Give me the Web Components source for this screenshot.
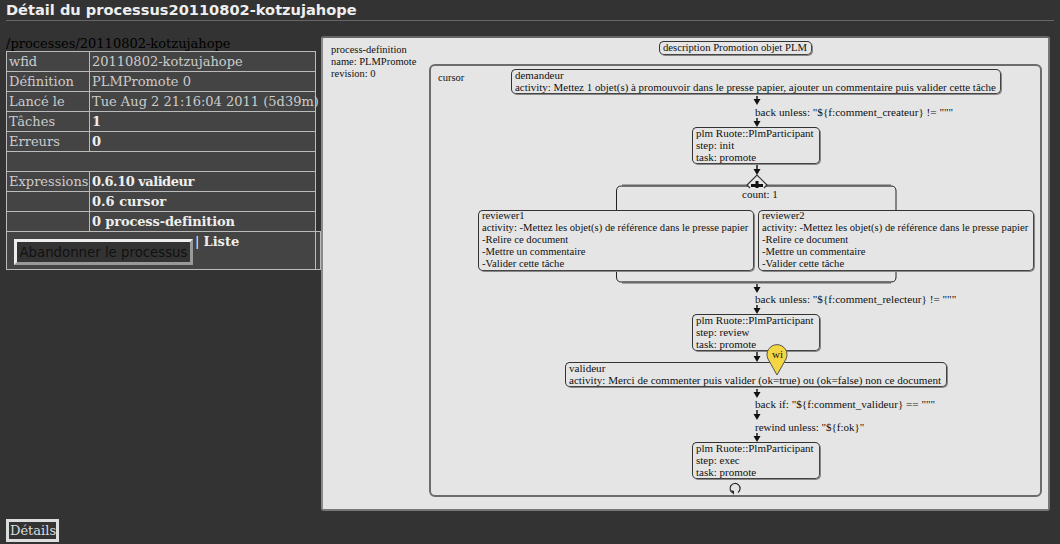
<!DOCTYPE html>
<html lang="fr"><head><meta charset="utf-8"><title>Détail</title>
<style>
html,body{margin:0;padding:0;background:#333;height:544px;overflow:hidden}
body{display:flex;flex-direction:column}
</style></head><body>
<x-title>Détail du processus20110802-kotzujahope</x-title>
<x-main>
  <x-process slot="left"></x-process>
  <x-diagram slot="right"></x-diagram>
</x-main>
<x-foot>Détails</x-foot>
<script>
function def(name, css, html){
  customElements.define(name, class extends HTMLElement{
    connectedCallback(){
      if(this.shadowRoot) return;
      const s=this.attachShadow({mode:'open'});
      s.innerHTML='<style>'+css+'</style>'+(typeof html==='function'?html(this):html);
    }
  });
}
def('x-title',`:host{display:block;margin:0 6px;height:21px;box-sizing:border-box;border-bottom:1px solid #666;font:bold 14.6px/19px "DejaVu Sans",sans-serif;color:#eee}`,'<slot></slot>');
def('x-main',`:host{display:flex;height:490px;box-sizing:border-box;padding:15px 0 0 6px}
 .l{width:315px;flex:none}.r{flex:none}`,'<div class="l"><slot name="left"></slot></div><div class="r"><slot name="right"></slot></div>');
def('x-foot',`:host{display:block;margin:8px 0 0 6px;width:53px;box-sizing:border-box;height:23px;border:3px solid #ddd;padding:0 1px;font:13px/17px "DejaVu Serif",serif;color:#ddd;white-space:nowrap}`,'<slot></slot>');
def('x-button',`:host{display:inline-block}
 button{display:block;box-sizing:border-box;width:179px;height:26px;margin:0;padding:0;background:#333;color:#111;border:3px solid;border-color:#eee #999 #999 #eee;font:13.3px "DejaVu Sans",sans-serif}`,'<button><slot></slot></button>');
def('x-process',`:host{display:block;font:13px/15px "DejaVu Serif",serif;color:#ccc}
 .cap{color:#000;height:15px;white-space:nowrap}
 table{border-collapse:collapse;table-layout:fixed;width:314px}
 td{border:1px solid #bbb;background:#444;padding:0 2px;height:19px;box-sizing:border-box;white-space:nowrap;vertical-align:middle}
 b{color:#eee}
 .last td{height:38px;vertical-align:top}
 .tools{display:flex;align-items:flex-start;padding:7px 0 0 7px}
 .tools span{margin:-5px 0 0 2px;color:#eee}
 tr{height:20px}`,
 `<div class="cap">/processes/20110802-kotzujahope</div>
 <table><colgroup><col style="width:83px"><col style="width:226px"><col style="width:5px"></colgroup>
 <tr><td>wfid</td><td>20110802-kotzujahope</td></tr>
 <tr><td>Définition</td><td>PLMPromote 0</td></tr>
 <tr><td>Lancé le</td><td>Tue Aug 2 21:16:04 2011 (5d39m)</td></tr>
 <tr><td>Tâches</td><td><b>1</b></td></tr>
 <tr><td>Erreurs</td><td><b>0</b></td></tr>
 <tr><td colspan="2"></td></tr>
 <tr><td>Expressions</td><td><b style="letter-spacing:-.5px">0.6.10 valideur</b></td></tr>
 <tr><td></td><td><b>0.6 cursor</b></td></tr>
 <tr><td></td><td><b style="letter-spacing:-.15px">0 process-definition</b></td></tr>
 <tr class="last"><td colspan="2" style="padding:0"><div class="tools"><x-button>Abandonner le processus</x-button><span>| <b>Liste</b></span></div></td><td></td></tr>
 </table>`);
const pos=e=>`left:${e.getAttribute('x')}px;top:${e.getAttribute('y')}px;`+(e.hasAttribute('w')?`width:${e.getAttribute('w')}px;`:'')+(e.hasAttribute('h')?`height:${e.getAttribute('h')}px;`:'');
customElements.define('x-node',class extends HTMLElement{connectedCallback(){
  if(this.shadowRoot)return;
  this.style.cssText+=pos(this);
  const fs=this.getAttribute('fs')||11;
  this.attachShadow({mode:'open'}).innerHTML=`<style>:host{position:absolute;box-sizing:border-box;border:1px solid;border-color:#333 #444 #444 #333;border-radius:5px;box-shadow:1px 1px 0 #888;padding:0 3px;font:${fs}px/12px "Liberation Serif",serif;color:#111;white-space:pre}
  :host([soft]){border:2px solid #6c6c6c;box-shadow:none;border-radius:6px}
  .t{margin-top:-1px}</style><div class="t"><slot></slot></div>`;
}});
customElements.define('x-label',class extends HTMLElement{connectedCallback(){
  if(this.shadowRoot)return;
  this.style.cssText+=pos(this);
  const fs=this.getAttribute('fs')||11;
  this.attachShadow({mode:'open'}).innerHTML=`<style>:host{position:absolute;font:${fs}px/12px "Liberation Serif",serif;color:#111;white-space:pre}</style><slot></slot>`;
}});
def('x-diagram',`:host{display:block;position:relative;width:729px;height:475px;box-sizing:border-box;background:#e5e5e5;border-radius:3px;border:2px solid #777;border-top-color:#666;border-left-color:#8a8a8a}
 .c{position:absolute;left:0;top:0;width:729px;height:475px;margin:-2px 0 0 -2px}
 svg{position:absolute;left:0;top:0;overflow:visible}`,
 ()=>{
  const O=(x,y)=>[x-321,y-36];
  const lines=t=>t.split('\n').map(l=>`<div>${l}</div>`).join('');
  const node=(x,y,x2,y2,t,fs=11,ex='')=>{const[a,b]=O(x,y);return `<x-node x="${a}" y="${b}" w="${x2-x}" h="${y2-y}" fs="${fs}" ${ex}>${lines(t)}</x-node>`};
  const lab=(x,y,t,fs=11)=>{const[a,b]=O(x,y);return `<x-label x="${a}" y="${b}" fs="${fs}">${lines(t)}</x-label>`};
  const arrow=(y1,y2)=>{const[a,b]=O(757,y1);const h=y2-y1;return `<path d="M${a} ${b}V${b+h-5}" stroke="#111" stroke-width="1.4" fill="none"/><path d="M${a-3.5} ${b+h-6}H${a+3.5}L${a} ${b+h}Z" fill="#111"/>`};
  const [pinx,piny]=O(777,345);
  const [dx,dy]=O(757,175);
  const [lx,ly]=O(735,488);
  const rev=n=>`reviewer${n}
activity: -Mettez les objet(s) de référence dans le presse papier
-Relire ce document
-Mettre un commentaire
-Valider cette tâche`;
  const plm=(s)=>`plm Ruote::PlmParticipant
step: ${s}
task: promote`;
  return `<div class="c">
  ${lab(331,44,'process-definition\nname: PLMPromote\nrevision: 0',10.5)}
  ${node(659,41,812,55,'description Promotion objet PLM',10.7)}
  ${node(429,64,1042,497,'',11,'soft')}
  ${lab(438,72,'cursor',10.5)}
  ${node(511,69,1001,94,'demandeur\nactivity: Mettez 1 objet(s) à promouvoir dans le presse papier, ajouter un commentaire puis valider cette tâche',10.95)}
  ${lab(755,106,'back unless: "${f:comment_createur} != """',11.2)}
  ${node(692,127,820,164,plm('init'),11)}
  <svg width="729" height="475" style="left:0;top:0">
    <path d="M${616.5-321} ${210-36}V${191-36}q0 -5 5 -5H${891-321}q5 0 5 5V${210-36}" fill="none" stroke="#222"/>
    <path d="M${616.5-321} ${272-36}V${277-36}q0 5 5 5H${891-321}q5 0 5 -5V${272-36}" fill="none" stroke="#222"/>
    <path d="M${622-321} ${185.5-36}H${891-321}M${622-321} ${282.5-36}H${891-321}" stroke="#666" stroke-width="2" fill="none"/>
    <path d="M${dx-10} ${dy+10}L${dx} ${dy}L${dx+10} ${dy+10}L${dx+7} ${dy+13}H${dx-7}Z" fill="#e5e5e5" stroke="none"/>
    <path d="M${dx-7} ${dy+13}L${dx-10} ${dy+10}L${dx} ${dy}L${dx+10} ${dy+10}L${dx+7} ${dy+13}" fill="none" stroke="#333" stroke-width="1.2"/>
    <path d="M${dx-6} ${dy+10.5}H${dx+6}M${dx} ${dy+6}V${dy+13}" stroke="#111" stroke-width="3" fill="none"/>
  </svg>
  ${lab(742,188,'count: 1')}
  ${node(478,210,754,271,rev(1),10.65)}
  ${node(758,210,1034,271,rev(2),10.65)}
  ${lab(755,293,'back unless: "${f:comment_relecteur} != """',11.2)}
  ${node(692,314,820,351,plm('review'),11)}
  ${node(565,362,947,387,'valideur\nactivity: Merci de commenter puis valider (ok=true) ou (ok=false) non ce document',11.1)}
  ${lab(755,398,'back if: "${f:comment_valideur} == """',11.2)}
  ${lab(755,421,'rewind unless: "${f:ok}"')}
  ${node(692,442,820,479,plm('exec'),11)}
  <svg width="729" height="475">
    ${arrow(96,105)}${arrow(118,127)}${arrow(165,175)}${arrow(284,293)}${arrow(305,314)}${arrow(352,362)}${arrow(389,398)}${arrow(410,420)}${arrow(433,442)}
    <path d="M${lx-2} ${ly+5}A5 5 0 1 1 ${lx+3} ${ly+4.5}" fill="none" stroke="#222" stroke-width="1.2"/>
    <path d="M${lx-4} ${ly+2}L${lx-1} ${ly+3}L${lx-1} ${ly+7}Z" fill="#222"/>
    <path d="M${pinx} ${piny+30}L${pinx-9} ${piny+14}A10 10 0 1 1 ${pinx+9} ${piny+14}Z" fill="#f4d642" stroke="#555"/>
  </svg>
  ${lab(772,348,'wi')}
  </div>`;
 });
</script>
</body></html>
